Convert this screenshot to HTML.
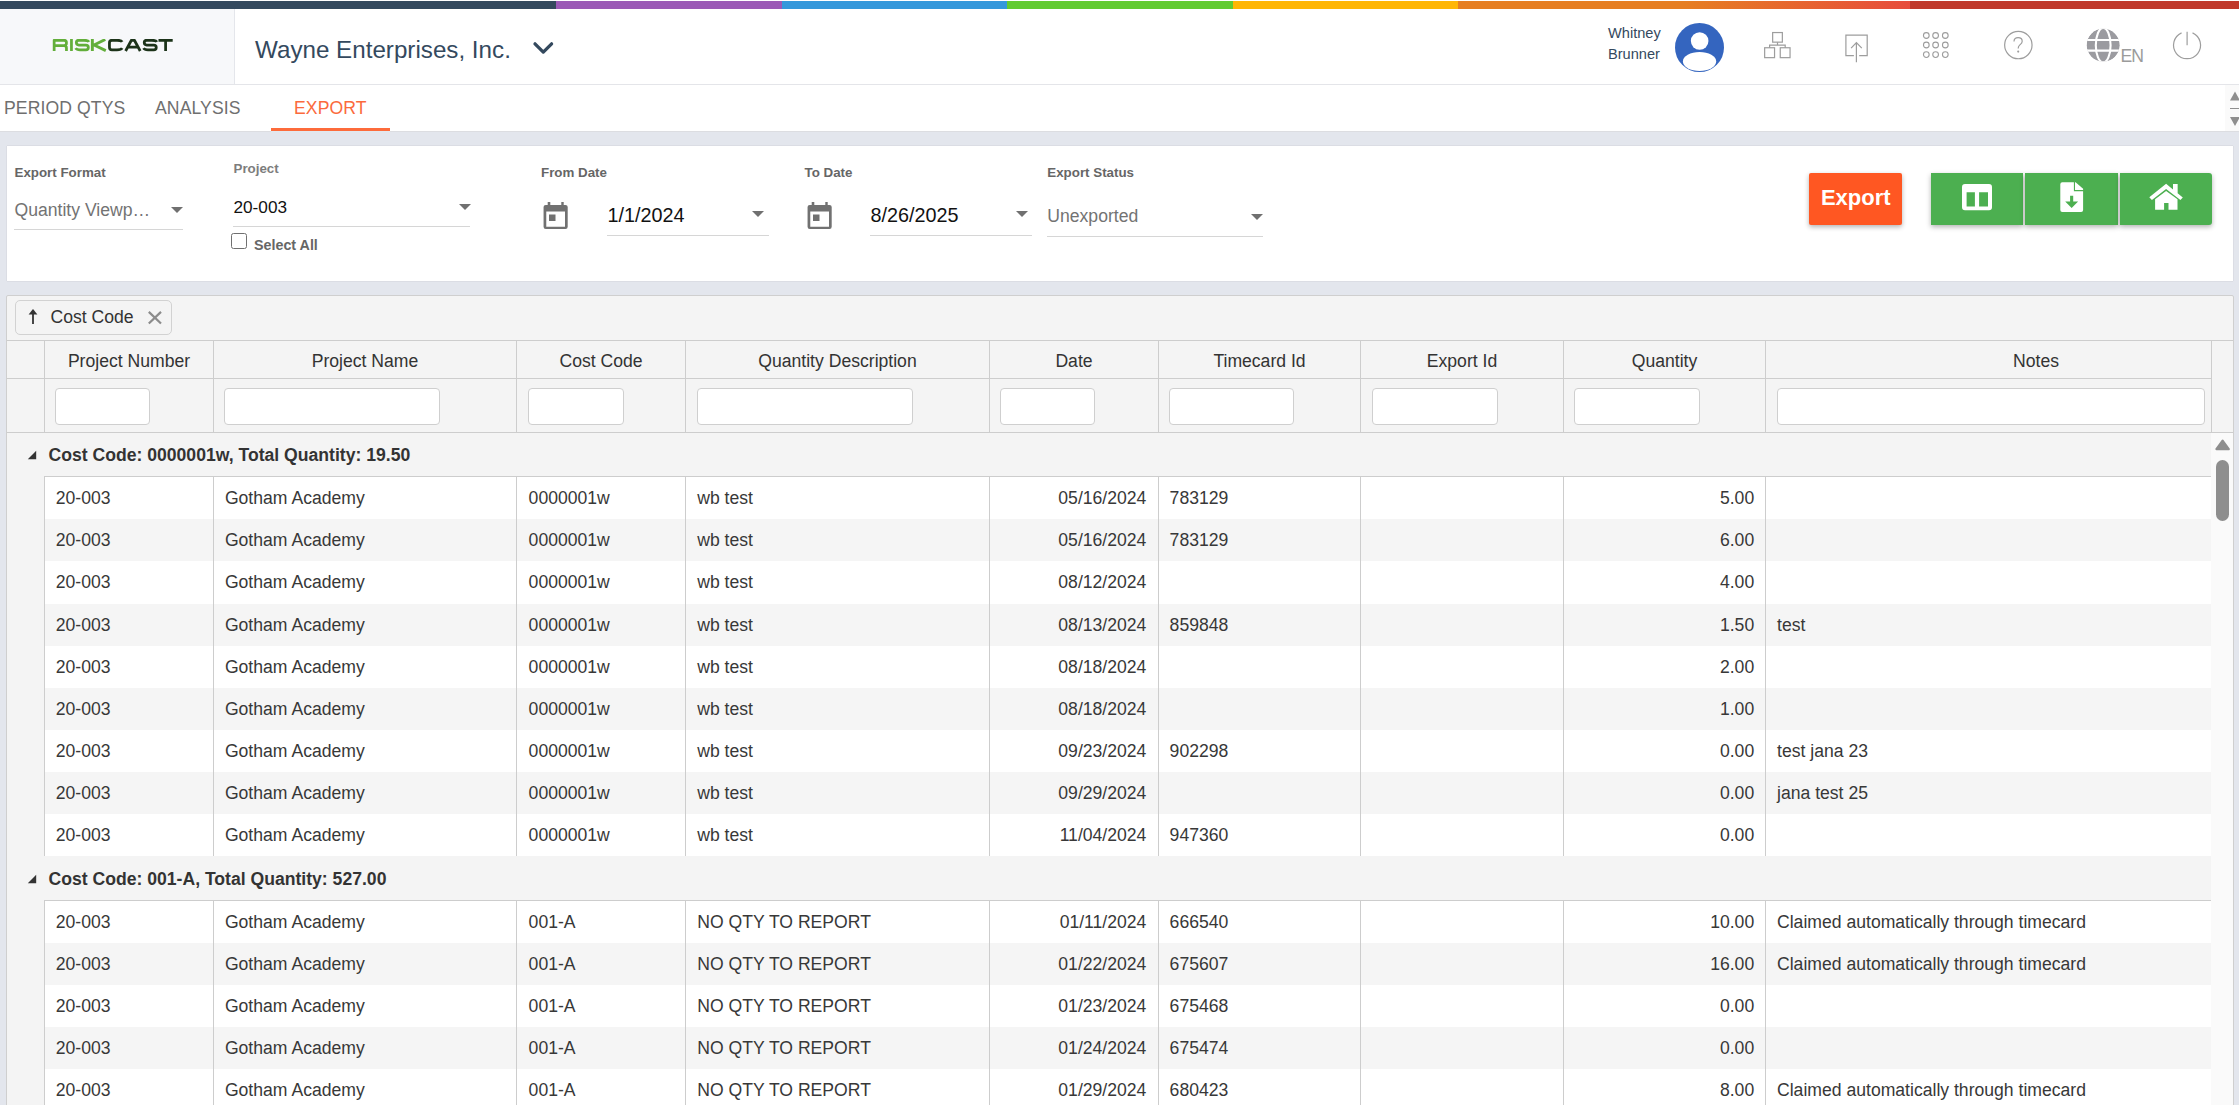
<!DOCTYPE html><html><head><meta charset="utf-8"><title>RiskCast Export</title><style>
*{box-sizing:border-box;margin:0;padding:0}
html,body{width:2239px;height:1105px;overflow:hidden}
body{position:relative;background:#e3e6ed;font-family:"Liberation Sans",sans-serif;color:#333}
.a{position:absolute}
.t{position:absolute;white-space:nowrap;line-height:1}
#bar{left:0;top:0;width:2239px;height:9px;background:#fff}
#bar i{position:absolute;left:0;top:1px;width:2239px;height:8px;background:linear-gradient(to right,#34495e 0,#34495e 556px,#9b59b6 556px,#9b59b6 782px,#3498db 782px,#3498db 1007px,#62cb31 1007px,#62cb31 1233px,#ffb606 1233px,#ffb606 1458px,#e67e22 1458px,#e67e22 1684px,#e74c3c 1910px,#c0392b 1910px,#c0392b 2239px)}
#hdr{left:0;top:9px;width:2239px;height:76px;background:#fff;border-bottom:1px solid #e4e5e9}
#logo{left:0;top:0;width:235px;height:75px;background:#f7f8fa;border-right:1px solid #e4e6eb}
#tabs{left:0;top:85px;width:2239px;height:46px;background:#fff}
.tab{font-size:17.6px;color:#6f6f6f;letter-spacing:0.1px}
#panel{left:7px;top:146px;width:2226px;height:135px;background:#fff;box-shadow:0 0 1px rgba(0,0,0,.22)}
.lbl{font-size:13.35px;font-weight:bold;color:#666}
.uline{position:absolute;height:1px;background:#d6d6d6}
.tri{position:absolute;width:0;height:0;border-left:6px solid transparent;border-right:6px solid transparent;border-top:6px solid #707070}
#grid{left:6px;top:295px;width:2228px;height:820px;background:#f4f4f4;border:1px solid #cfcfcf;border-radius:2px 2px 0 0}
.hl{position:absolute;height:1px;background:#cdcdcd}
.vl{position:absolute;width:1px;background:#cdcdcd}
.hc{font-size:17.6px;color:#333;text-align:center}
.fin{position:absolute;height:37px;background:#fff;border:1px solid #cfcfcf;border-radius:4px}
.row{position:absolute;left:44px;width:2167px;height:42px}
.row.alt{background:#f5f5f5}
.row.w{background:#fff}
.c{position:absolute;top:0;height:100%;font-size:17.6px;color:#383838;line-height:42px;white-space:nowrap}
.gtxt{font-size:17.6px;font-weight:bold;color:#333}
.btn{position:absolute;top:173px;height:52px;box-shadow:0 2px 5px rgba(0,0,0,.3)}
</style></head><body>
<div id="bar" class="a"><i></i></div>
<div id="hdr" class="a">
<div id="logo" class="a"><svg class="a" style="left:52px;top:30px" width="124" height="13" viewBox="0 0 124 13"><g fill="none" stroke-width="2.75" stroke-linejoin="round"><g stroke="#62ae3a"><path d="M2.15 12 V1.25 H12 Q14.45 1.25 14.45 3.7 V4 Q14.45 6.6 12 6.6 H2.15 M12 6.6 Q14.45 6.6 14.45 9 V12"/><path d="M19.45 0 V12"/><path d="M37 2.9 Q36 1.25 32 1.25 H26.8 Q24.35 1.25 24.35 3.6 Q24.35 6 26.8 6 H33.9 Q36.35 6 36.35 8.4 Q36.35 10.75 33.9 10.75 H28 Q24.6 10.75 23.6 9.1"/><path d="M40.35 0 V12 M41.5 6.2 L53.3 0.5 M41.5 5.8 L53.8 11.6" stroke-width="2.9"/></g><g stroke="#1c3319"><path d="M70.2 2.9 Q69.2 1.25 65 1.25 H60 Q57.45 1.25 57.45 3.8 V8.2 Q57.45 10.75 60 10.75 H65 Q69.2 10.75 70.2 9.1"/><path d="M73.6 12 L79.4 1.25 H82.4 L88.2 12 M76.5 8.2 H85.3"/><path d="M37 2.9 Q36 1.25 32 1.25 H26.8 Q24.35 1.25 24.35 3.6 Q24.35 6 26.8 6 H33.9 Q36.35 6 36.35 8.4 Q36.35 10.75 33.9 10.75 H28 Q24.6 10.75 23.6 9.1" transform="translate(67.9 0)"/><path d="M106.5 1.25 H120.7 M113.6 1.25 V12"/></g></g></svg></div>
<div class="t" style="left:255px;top:29px;font-size:24.2px;color:#34495e">Wayne Enterprises, Inc.</div>
<svg class="a" style="left:530px;top:31px" width="26" height="18" viewBox="0 0 26 18"><path d="M5 3.8 L13.3 12.1 L21.6 3.8" fill="none" stroke="#34495e" stroke-width="3.3" stroke-linecap="round" stroke-linejoin="round"/></svg>
<div class="t" style="left:1608px;top:13.75px;font-size:14.6px;color:#34495e;line-height:21.4px">Whitney<br>Brunner</div>
<svg class="a" style="left:1675px;top:14px" width="49" height="49" viewBox="0 0 49 49"><defs><clipPath id="cc"><circle cx="24.5" cy="24.5" r="24.5"/></clipPath></defs><circle cx="24.5" cy="24.5" r="24.5" fill="#3465bf"/><g clip-path="url(#cc)"><circle cx="24.65" cy="18" r="8.8" fill="#fff"/><ellipse cx="24.55" cy="38.5" rx="16.65" ry="9.4" fill="#fff"/></g></svg>
<svg class="a" style="left:1762px;top:20px" width="32" height="40" viewBox="0 0 32 40"><g fill="none" stroke="#9d9d9d" stroke-width="1.2"><rect x="10.65" y="3.55" width="9.7" height="9.6"/><rect x="2.65" y="18.75" width="9.9" height="9.9"/><rect x="18.25" y="18.75" width="9.8" height="9.9"/><path d="M15.5 13.15 V16.1 M7.6 18.75 V16.1 H23.2 V18.75"/></g></svg>
<svg class="a" style="left:1840px;top:12.5px" width="34" height="44" viewBox="0 0 34 44"><g fill="none" stroke="#9d9d9d" stroke-width="1.2"><path d="M13.9 33.7 H5.9 V13.2 H27.2 V33.7 H19.2"/><path d="M16.4 40.2 V20.4 M11.1 26.1 L16.4 20.5 L21.8 26.1"/></g></svg>
<svg class="a" style="left:1918px;top:19px" width="36" height="36" viewBox="0 0 36 36"><g fill="none" stroke="#9d9d9d" stroke-width="1.1"><circle cx="8.3" cy="7.5" r="2.85"/><circle cx="17.6" cy="7.5" r="2.85"/><circle cx="27.3" cy="7.5" r="2.85"/><circle cx="8.3" cy="17.0" r="2.85"/><circle cx="17.6" cy="17.0" r="2.85"/><circle cx="27.3" cy="17.0" r="2.85"/><circle cx="8.3" cy="26.6" r="2.85"/><circle cx="17.6" cy="26.6" r="2.85"/><circle cx="27.3" cy="26.6" r="2.85"/></g></svg>
<svg class="a" style="left:2000px;top:19px" width="36" height="36" viewBox="0 0 36 36"><g fill="none" stroke="#9d9d9d" stroke-width="1.2"><circle cx="18.35" cy="17.05" r="13.7"/><path d="M14 13.6 C14 10.9 15.8 9.6 18.1 9.6 C20.5 9.6 22.2 11.1 22.2 13.2 C22.2 15.3 20.7 16.1 19.6 17.1 C18.6 18 18.2 18.7 18.2 20.4"/></g><circle cx="18.2" cy="23.6" r="1.05" fill="#9d9d9d"/></svg>
<svg class="a" style="left:2084px;top:17px" width="38" height="38" viewBox="0 0 38 38"><defs><clipPath id="gc"><circle cx="19.2" cy="19.2" r="16.6"/></clipPath></defs><g clip-path="url(#gc)"><circle cx="19.2" cy="19.2" r="16.6" fill="#9b9ba0"/><g fill="none" stroke="#fff" stroke-width="2.1"><ellipse cx="19.2" cy="19.2" rx="7.4" ry="17.2"/><path d="M1 14 H38 M1 24.6 H38"/></g></g></svg>
<div class="t" style="left:2120.5px;top:39.4px;font-size:17.6px;letter-spacing:-1px;color:#9b9b9b">EN</div>
<svg class="a" style="left:2168px;top:9.5px" width="38" height="44" viewBox="0 0 38 44"><g fill="none" stroke="#9d9d9d" stroke-width="1.2"><path d="M13.56 13.87 A13.5 13.5 0 1 0 24.54 13.87"/><path d="M19.1 12.7 V26.2"/></g></svg>
</div>
<div id="tabs" class="a">
<div class="t tab" style="left:4px;top:15px">PERIOD QTYS</div>
<div class="t tab" style="left:155px;top:15px">ANALYSIS</div>
<div class="t tab" style="left:294px;top:15px;color:#fb6a3c">EXPORT</div>
<div class="a" style="left:271px;top:43px;width:119px;height:3px;background:#fd6b3b"></div>
<div class="a" style="left:2225px;top:0;width:14px;height:46px;background:#fafafa"></div>
<svg class="a" style="left:2228px;top:4px" width="11" height="40" viewBox="0 0 11 40"><path d="M2 11.5 L7 2.5 L12 11.5Z M2 28 L7 37 L12 28Z" fill="#8e8e8e"/><path d="M2 19.5 H11" stroke="#8e8e8e" stroke-width="1"/></svg>
</div>
<div class="a" style="left:0;top:131px;width:2239px;height:1px;background:#dcdde1"></div>
<div class="a" style="left:271px;top:131px;width:119px;height:1px;background:#e1e8ef"></div>
<div id="panel" class="a"></div>
<div class="t lbl" style="left:14.5px;top:166.3px;color:#666">Export Format</div>
<div class="t" style="left:14.5px;top:201.9px;font-size:17.6px;color:#737373">Quantity Viewp&hellip;</div>
<div class="tri" style="left:171px;top:207px"></div>
<div class="uline" style="left:14px;top:229px;width:169px"></div>
<div class="t lbl" style="left:233.5px;top:162.3px;color:#7d7d7d">Project</div>
<div class="t" style="left:233.5px;top:198.5px;font-size:17.2px;color:#111">20-003</div>
<div class="tri" style="left:458.5px;top:204px"></div>
<div class="uline" style="left:233px;top:226px;width:237px"></div>
<div class="a" style="left:231px;top:233px;width:16px;height:16px;border:1.5px solid #707070;border-radius:2.5px;background:#fff"></div>
<div class="t" style="left:254px;top:237.5px;font-size:14.3px;font-weight:bold;color:#666">Select All</div>
<div class="t lbl" style="left:541px;top:166.3px;color:#666">From Date</div>
<svg class="a" style="left:541.5px;top:200px" width="28" height="30" viewBox="0 0 28 30"><path fill="#717171" fill-rule="evenodd" d="M5.7 2h2.6v2.9h11v-2.9h2.4v2.9h1.8a2.2 2.2 0 0 1 2.2 2.2v19.7a2.2 2.2 0 0 1-2.2 2.2H3.77a2.2 2.2 0 0 1-2.2-2.2V7.1a2.2 2.2 0 0 1 2.2-2.2H5.7z M4.27 11.6V26.8H23V11.6z M7 14.5h6.5v6.5h-6.5z"/></svg>
<div class="t" style="left:607.5px;top:206.2px;font-size:19.8px;color:#111">1/1/2024</div>
<div class="tri" style="left:752px;top:211px"></div>
<div class="uline" style="left:607px;top:235px;width:162px"></div>
<div class="t lbl" style="left:804.5px;top:166.3px;color:#666">To Date</div>
<svg class="a" style="left:805.5px;top:200px" width="28" height="30" viewBox="0 0 28 30"><path fill="#717171" fill-rule="evenodd" d="M5.7 2h2.6v2.9h11v-2.9h2.4v2.9h1.8a2.2 2.2 0 0 1 2.2 2.2v19.7a2.2 2.2 0 0 1-2.2 2.2H3.77a2.2 2.2 0 0 1-2.2-2.2V7.1a2.2 2.2 0 0 1 2.2-2.2H5.7z M4.27 11.6V26.8H23V11.6z M7 14.5h6.5v6.5h-6.5z"/></svg>
<div class="t" style="left:870.5px;top:206.2px;font-size:19.8px;color:#111">8/26/2025</div>
<div class="tri" style="left:1016px;top:211px"></div>
<div class="uline" style="left:870px;top:235px;width:162px"></div>
<div class="t lbl" style="left:1047.3px;top:166.3px;color:#666">Export Status</div>
<div class="t" style="left:1047.3px;top:207.6px;font-size:17.6px;color:#737373">Unexported</div>
<div class="tri" style="left:1251px;top:214px"></div>
<div class="uline" style="left:1047px;top:236px;width:216px"></div>
<div class="btn" style="left:1809px;width:93px;background:#ff5722;border-radius:2px"><div class="t" style="left:11.9px;top:13.9px;font-size:22px;font-weight:bold;color:#fff">Export</div></div>
<div class="btn" style="left:1931px;width:92px;background:#4caf50"></div>
<div class="btn" style="left:2025px;width:93px;background:#4caf50"></div>
<div class="btn" style="left:2120px;width:92px;background:#4caf50;border-radius:0 3px 3px 0"></div>
<svg class="a" style="left:1962px;top:183.8px" width="30" height="27" viewBox="0 0 30 27"><path fill="#fff" fill-rule="evenodd" d="M3 0h24a3 3 0 0 1 3 3v20.2a3 3 0 0 1-3 3H3a3 3 0 0 1-3-3V3a3 3 0 0 1 3-3z M4.6 8.2v14.2h8.3V8.2z M17.1 8.2v14.2h8.9V8.2z"/></svg>
<svg class="a" style="left:2060px;top:181.8px" width="24" height="31" viewBox="0 0 24 31"><path fill="#fff" d="M0.3 2.2a2 2 0 0 1 2-2H13.9V9.2H23.1V28.05a2 2 0 0 1-2 2H2.3a2 2 0 0 1-2-2Z"/><path fill="#fff" d="M15 0.2H15.6L23.1 6.7V8.1H15Z"/><path fill="#4caf50" d="M10.1 13.8H13.2V19.4H18.1L11.65 26.1L5.2 19.4H10.1Z"/></svg>
<svg class="a" style="left:2148px;top:182px" width="37" height="30" viewBox="0 0 37 30"><path fill="#fff" d="M18.1 1.85L25 7.45V2H29.65V11.2L34.8 15.4L32.4 18L18.1 7.05L3.9 18L1.3 15.3Z"/><path fill="#fff" d="M18.1 8.9L7.1 17.3V27.8H16.1V21.1H20.5V27.8H29.5V17.3Z"/></svg>
<div id="grid" class="a"></div>
<div class="a" style="left:15px;top:300px;width:157px;height:35px;border:1px solid #d2d2d2;border-radius:5px;background:#f4f4f4"></div>
<svg class="a" style="left:25px;top:306px" width="16" height="20" viewBox="0 0 16 20"><path d="M8 18 V5" stroke="#333" stroke-width="1.8"/><path d="M3.6 8.4 L8 3 L12.4 8.4Z" fill="#333"/></svg>
<div class="t" style="left:50.5px;top:308.5px;font-size:17.6px;color:#333">Cost Code</div>
<svg class="a" style="left:146px;top:309px" width="18" height="18" viewBox="0 0 18 18"><path d="M2.8 2.9 L15 14.5 M15 2.9 L2.8 14.5" stroke="#8c8c8c" stroke-width="2.2"/></svg>
<div class="hl" style="left:7px;top:340px;width:2226px"></div>
<div class="hl" style="left:7px;top:378px;width:2204px"></div>
<div class="hl" style="left:7px;top:432px;width:2226px"></div>
<div class="vl" style="left:44px;top:340px;height:92px"></div>
<div class="vl" style="left:213px;top:340px;height:92px"></div>
<div class="vl" style="left:516px;top:340px;height:92px"></div>
<div class="vl" style="left:685px;top:340px;height:92px"></div>
<div class="vl" style="left:989px;top:340px;height:92px"></div>
<div class="vl" style="left:1158px;top:340px;height:92px"></div>
<div class="vl" style="left:1360px;top:340px;height:92px"></div>
<div class="vl" style="left:1563px;top:340px;height:92px"></div>
<div class="vl" style="left:1765px;top:340px;height:92px"></div>
<div class="vl" style="left:2211px;top:340px;height:92px"></div>
<div class="t hc" style="left:45px;width:168px;top:353.2px">Project Number</div>
<div class="fin" style="left:55.4px;top:388px;width:95.1px"></div>
<div class="t hc" style="left:214px;width:302px;top:353.2px">Project Name</div>
<div class="fin" style="left:224.4px;top:388px;width:216.0px"></div>
<div class="t hc" style="left:517px;width:168px;top:353.2px">Cost Code</div>
<div class="fin" style="left:528.2px;top:388px;width:95.5px"></div>
<div class="t hc" style="left:686px;width:303px;top:353.2px">Quantity Description</div>
<div class="fin" style="left:697.4px;top:388px;width:216.0px"></div>
<div class="t hc" style="left:990px;width:168px;top:353.2px">Date</div>
<div class="fin" style="left:1000.3px;top:388px;width:95.1px"></div>
<div class="t hc" style="left:1159px;width:201px;top:353.2px">Timecard Id</div>
<div class="fin" style="left:1169.2px;top:388px;width:125.3px"></div>
<div class="t hc" style="left:1361px;width:202px;top:353.2px">Export Id</div>
<div class="fin" style="left:1372.3px;top:388px;width:125.3px"></div>
<div class="t hc" style="left:1564px;width:201px;top:353.2px">Quantity</div>
<div class="fin" style="left:1574.3px;top:388px;width:125.3px"></div>
<div class="t hc" style="left:1766px;width:540px;top:353.2px">Notes</div>
<div class="fin" style="left:1777.0px;top:388px;width:428.0px"></div>
<div class="a" style="left:2211px;top:433px;width:22px;height:680px;background:#fafafa"></div>
<svg class="a" style="left:2213px;top:436px" width="18" height="90" viewBox="0 0 18 90"><path d="M3.4 13.1 L9.6 4.6 L15.8 13.1Z" fill="#8e8e8e" stroke="#8e8e8e" stroke-width="2.2" stroke-linejoin="round"/><rect x="3" y="24" width="13" height="61" rx="6.5" fill="#8e8e8e"/></svg>
<svg class="a" style="left:27px;top:450.0px" width="10" height="10" viewBox="0 0 10 10"><path d="M9.2 0.8 V9.2 H0.8Z" fill="#333"/></svg>
<div class="t gtxt" style="left:48.5px;top:447.3px">Cost Code: 0000001w, Total Quantity: 19.50</div>
<div class="hl" style="left:44px;top:476.0px;width:2167px"></div>
<div class="row w" style="top:477px;height:42px"><div class="c" style="left:11.8px">20-003</div><div class="c" style="left:180.9px">Gotham Academy</div><div class="c" style="left:484.6px">0000001w</div><div class="c" style="left:653.2px">wb test</div><div class="c" style="left:945px;width:157.4px;text-align:right">05/16/2024</div><div class="c" style="left:1125.6px">783129</div><div class="c" style="left:1519px;width:191.2px;text-align:right">5.00</div></div>
<div class="row alt" style="top:519px;height:42px"><div class="c" style="left:11.8px">20-003</div><div class="c" style="left:180.9px">Gotham Academy</div><div class="c" style="left:484.6px">0000001w</div><div class="c" style="left:653.2px">wb test</div><div class="c" style="left:945px;width:157.4px;text-align:right">05/16/2024</div><div class="c" style="left:1125.6px">783129</div><div class="c" style="left:1519px;width:191.2px;text-align:right">6.00</div></div>
<div class="row w" style="top:561px;height:43px"><div class="c" style="left:11.8px">20-003</div><div class="c" style="left:180.9px">Gotham Academy</div><div class="c" style="left:484.6px">0000001w</div><div class="c" style="left:653.2px">wb test</div><div class="c" style="left:945px;width:157.4px;text-align:right">08/12/2024</div><div class="c" style="left:1519px;width:191.2px;text-align:right">4.00</div></div>
<div class="row alt" style="top:604px;height:42px"><div class="c" style="left:11.8px">20-003</div><div class="c" style="left:180.9px">Gotham Academy</div><div class="c" style="left:484.6px">0000001w</div><div class="c" style="left:653.2px">wb test</div><div class="c" style="left:945px;width:157.4px;text-align:right">08/13/2024</div><div class="c" style="left:1125.6px">859848</div><div class="c" style="left:1519px;width:191.2px;text-align:right">1.50</div><div class="c" style="left:1733.0px">test</div></div>
<div class="row w" style="top:646px;height:42px"><div class="c" style="left:11.8px">20-003</div><div class="c" style="left:180.9px">Gotham Academy</div><div class="c" style="left:484.6px">0000001w</div><div class="c" style="left:653.2px">wb test</div><div class="c" style="left:945px;width:157.4px;text-align:right">08/18/2024</div><div class="c" style="left:1519px;width:191.2px;text-align:right">2.00</div></div>
<div class="row alt" style="top:688px;height:42px"><div class="c" style="left:11.8px">20-003</div><div class="c" style="left:180.9px">Gotham Academy</div><div class="c" style="left:484.6px">0000001w</div><div class="c" style="left:653.2px">wb test</div><div class="c" style="left:945px;width:157.4px;text-align:right">08/18/2024</div><div class="c" style="left:1519px;width:191.2px;text-align:right">1.00</div></div>
<div class="row w" style="top:730px;height:42px"><div class="c" style="left:11.8px">20-003</div><div class="c" style="left:180.9px">Gotham Academy</div><div class="c" style="left:484.6px">0000001w</div><div class="c" style="left:653.2px">wb test</div><div class="c" style="left:945px;width:157.4px;text-align:right">09/23/2024</div><div class="c" style="left:1125.6px">902298</div><div class="c" style="left:1519px;width:191.2px;text-align:right">0.00</div><div class="c" style="left:1733.0px">test jana 23</div></div>
<div class="row alt" style="top:772px;height:42px"><div class="c" style="left:11.8px">20-003</div><div class="c" style="left:180.9px">Gotham Academy</div><div class="c" style="left:484.6px">0000001w</div><div class="c" style="left:653.2px">wb test</div><div class="c" style="left:945px;width:157.4px;text-align:right">09/29/2024</div><div class="c" style="left:1519px;width:191.2px;text-align:right">0.00</div><div class="c" style="left:1733.0px">jana test 25</div></div>
<div class="row w" style="top:814px;height:42px"><div class="c" style="left:11.8px">20-003</div><div class="c" style="left:180.9px">Gotham Academy</div><div class="c" style="left:484.6px">0000001w</div><div class="c" style="left:653.2px">wb test</div><div class="c" style="left:945px;width:157.4px;text-align:right">11/04/2024</div><div class="c" style="left:1125.6px">947360</div><div class="c" style="left:1519px;width:191.2px;text-align:right">0.00</div></div>
<div class="vl" style="left:44px;top:477px;height:379px"></div>
<div class="vl" style="left:213px;top:477px;height:379px"></div>
<div class="vl" style="left:516px;top:477px;height:379px"></div>
<div class="vl" style="left:685px;top:477px;height:379px"></div>
<div class="vl" style="left:989px;top:477px;height:379px"></div>
<div class="vl" style="left:1158px;top:477px;height:379px"></div>
<div class="vl" style="left:1360px;top:477px;height:379px"></div>
<div class="vl" style="left:1563px;top:477px;height:379px"></div>
<div class="vl" style="left:1765px;top:477px;height:379px"></div>
<svg class="a" style="left:27px;top:874.0px" width="10" height="10" viewBox="0 0 10 10"><path d="M9.2 0.8 V9.2 H0.8Z" fill="#333"/></svg>
<div class="t gtxt" style="left:48.5px;top:871.3px">Cost Code: 001-A, Total Quantity: 527.00</div>
<div class="hl" style="left:44px;top:900.0px;width:2167px"></div>
<div class="row w" style="top:901px;height:42px"><div class="c" style="left:11.8px">20-003</div><div class="c" style="left:180.9px">Gotham Academy</div><div class="c" style="left:484.6px">001-A</div><div class="c" style="left:653.2px">NO QTY TO REPORT</div><div class="c" style="left:945px;width:157.4px;text-align:right">01/11/2024</div><div class="c" style="left:1125.6px">666540</div><div class="c" style="left:1519px;width:191.2px;text-align:right">10.00</div><div class="c" style="left:1733.0px">Claimed automatically through timecard</div></div>
<div class="row alt" style="top:943px;height:42px"><div class="c" style="left:11.8px">20-003</div><div class="c" style="left:180.9px">Gotham Academy</div><div class="c" style="left:484.6px">001-A</div><div class="c" style="left:653.2px">NO QTY TO REPORT</div><div class="c" style="left:945px;width:157.4px;text-align:right">01/22/2024</div><div class="c" style="left:1125.6px">675607</div><div class="c" style="left:1519px;width:191.2px;text-align:right">16.00</div><div class="c" style="left:1733.0px">Claimed automatically through timecard</div></div>
<div class="row w" style="top:985px;height:42px"><div class="c" style="left:11.8px">20-003</div><div class="c" style="left:180.9px">Gotham Academy</div><div class="c" style="left:484.6px">001-A</div><div class="c" style="left:653.2px">NO QTY TO REPORT</div><div class="c" style="left:945px;width:157.4px;text-align:right">01/23/2024</div><div class="c" style="left:1125.6px">675468</div><div class="c" style="left:1519px;width:191.2px;text-align:right">0.00</div></div>
<div class="row alt" style="top:1027px;height:42px"><div class="c" style="left:11.8px">20-003</div><div class="c" style="left:180.9px">Gotham Academy</div><div class="c" style="left:484.6px">001-A</div><div class="c" style="left:653.2px">NO QTY TO REPORT</div><div class="c" style="left:945px;width:157.4px;text-align:right">01/24/2024</div><div class="c" style="left:1125.6px">675474</div><div class="c" style="left:1519px;width:191.2px;text-align:right">0.00</div></div>
<div class="row w" style="top:1069px;height:42px"><div class="c" style="left:11.8px">20-003</div><div class="c" style="left:180.9px">Gotham Academy</div><div class="c" style="left:484.6px">001-A</div><div class="c" style="left:653.2px">NO QTY TO REPORT</div><div class="c" style="left:945px;width:157.4px;text-align:right">01/29/2024</div><div class="c" style="left:1125.6px">680423</div><div class="c" style="left:1519px;width:191.2px;text-align:right">8.00</div><div class="c" style="left:1733.0px">Claimed automatically through timecard</div></div>
<div class="vl" style="left:44px;top:901px;height:210px"></div>
<div class="vl" style="left:213px;top:901px;height:210px"></div>
<div class="vl" style="left:516px;top:901px;height:210px"></div>
<div class="vl" style="left:685px;top:901px;height:210px"></div>
<div class="vl" style="left:989px;top:901px;height:210px"></div>
<div class="vl" style="left:1158px;top:901px;height:210px"></div>
<div class="vl" style="left:1360px;top:901px;height:210px"></div>
<div class="vl" style="left:1563px;top:901px;height:210px"></div>
<div class="vl" style="left:1765px;top:901px;height:210px"></div>
</body></html>
